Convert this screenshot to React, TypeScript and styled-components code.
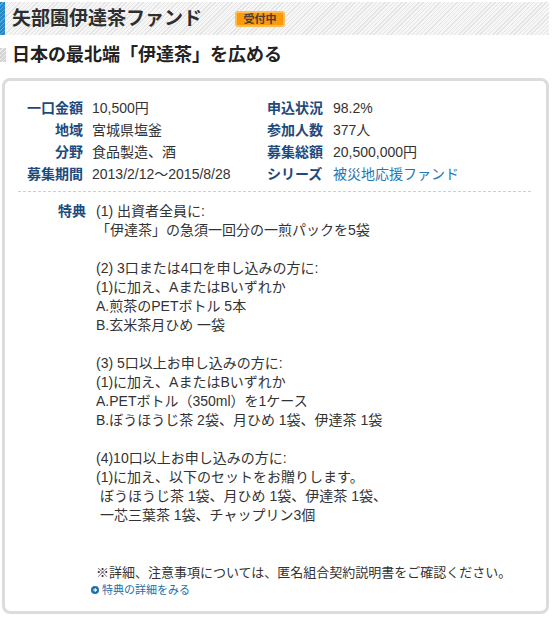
import styled, { createGlobalStyle } from "styled-components";

const GlobalStyle = createGlobalStyle`
  html, body {
    margin: 0;
    padding: 0;
    background: #fff;
  }
  body {
    font-family: "Liberation Sans", "Noto Sans CJK JP", sans-serif;
    color: #333;
  }
`;

const Page = styled.div`
  width: 553px;
  padding-top: 2px;
`;

const Header = styled.div`
  display: flex;
  align-items: center;
  height: 33px;
  width: 549px;
  background: repeating-linear-gradient(135deg, #f6f6f6 0 2px, #e4e4e4 2px 3px);
`;

const BlueBar = styled.div`
  width: 5px;
  align-self: stretch;
  background: repeating-linear-gradient(135deg, #2489c6 0 2px, #56a9dc 2px 3px);
`;

const Title = styled.h1`
  margin: 0 0 0 7px;
  font-size: 19px;
  line-height: 24px;
  font-weight: bold;
  color: #2e2e2e;
`;

const Badge = styled.span`
  margin-left: 33px;
  display: inline-flex;
  align-items: center;
  justify-content: center;
  width: 46px;
  height: 12px;
  border: 2px solid #fdbb52;
  border-radius: 3px;
  background: #fb9a08;
  color: #4a4038;
  font-size: 11px;
  font-weight: bold;
  line-height: 12px;
`;

const SubRow = styled.div`
  display: flex;
  align-items: center;
  margin-top: 10px;
  height: 20px;
`;

const GraySquare = styled.div`
  width: 6px;
  height: 14px;
  background: repeating-linear-gradient(135deg, #d4d4d4 0 2px, #ececec 2px 3px);
`;

const SubTitle = styled.h2`
  margin: 0 0 0 6px;
  font-size: 18px;
  line-height: 20px;
  font-weight: bold;
  color: #222;
`;

const Card = styled.div`
  margin: 13px 4px 0 2px;
  border: 3px solid #dcdcdc;
  border-radius: 8px;
  padding: 16px 15px 13px 13px;
`;

const InfoGrid = styled.div`
  display: grid;
  grid-template-columns: 58px 166px 57px 1fr;
  column-gap: 9px;
  padding-left: 7px;
  font-size: 14px;
  line-height: 22px;
`;

const Label = styled.div<{ $align?: "left" | "right" }>`
  font-weight: bold;
  color: #1d4a7c;
  text-align: ${(p) => p.$align ?? "right"};
  white-space: nowrap;
`;

const Value = styled.div<{ $link?: boolean }>`
  color: ${(p) => (p.$link ? "#1f78b4" : "#333")};
  white-space: nowrap;
`;

const Dashed = styled.div`
  margin-top: 6px;
  border-top: 1px dashed #cfcfcf;
`;

const Perks = styled.div`
  display: grid;
  grid-template-columns: 68px 1fr;
  column-gap: 10px;
  margin-top: 10px;
  font-size: 14px;
  line-height: 19px;
`;

const PerkText = styled.div`
  color: #333;
  white-space: pre;
`;

const Note = styled.div`
  margin: 19px 0 0 78px;
  font-size: 13px;
  line-height: 19px;
  color: #333;
`;

const DetailLink = styled.a`
  display: flex;
  align-items: center;
  gap: 3px;
  margin-left: 73px;
  font-size: 11px;
  line-height: 16px;
  color: #1f6fa8;
  text-decoration: none;
`;

const info: [string, string, string, string, boolean?][] = [
  ["一口金額", "10,500円", "申込状況", "98.2%"],
  ["地域", "宮城県塩釜", "参加人数", "377人"],
  ["分野", "食品製造、酒", "募集総額", "20,500,000円"],
  ["募集期間", "2013/2/12～2015/8/28", "シリーズ", "被災地応援ファンド", true],
];

const perkLines = [
  "(1) 出資者全員に:",
  "「伊達茶」の急須一回分の一煎パックを5袋",
  "",
  "(2) 3口または4口を申し込みの方に:",
  "(1)に加え、AまたはBいずれか",
  "A.煎茶のPETボトル 5本",
  "B.玄米茶月ひめ 一袋",
  "",
  "(3) 5口以上お申し込みの方に:",
  "(1)に加え、AまたはBいずれか",
  "A.PETボトル（350ml）を1ケース",
  "B.ぼうほうじ茶 2袋、月ひめ 1袋、伊達茶 1袋",
  "",
  "(4)10口以上お申し込みの方に:",
  "(1)に加え、以下のセットをお贈りします。",
  " ぼうほうじ茶 1袋、月ひめ 1袋、伊達茶 1袋、",
  " 一芯三葉茶 1袋、チャップリン3個",
  "",
];

function ArrowDot() {
  return (
    <svg width="8" height="8" viewBox="0 0 8 8">
      <circle cx="4" cy="4" r="4" fill="#1f6fa8" />
      <path d="M2 4h3.2M3.8 2.4L5.4 4 3.8 5.6" stroke="#fff" strokeWidth="1.2" fill="none" />
    </svg>
  );
}

export default function App() {
  return (
    <>
      <GlobalStyle />
      <Page>
        <Header>
          <BlueBar />
          <Title>矢部園伊達茶ファンド</Title>
          <Badge>受付中</Badge>
        </Header>
        <SubRow>
          <GraySquare />
          <SubTitle>日本の最北端「伊達茶」を広める</SubTitle>
        </SubRow>
        <Card>
          <InfoGrid>
            {info.map(([l1, v1, l2, v2, link]) => (
              <>
                <Label key={l1}>{l1}</Label>
                <Value key={l1 + "v"}>{v1}</Value>
                <Label key={l2} $align="left">
                  {l2}
                </Label>
                <Value key={l2 + "v"} $link={link}>
                  {v2}
                </Value>
              </>
            ))}
          </InfoGrid>
          <Dashed />
          <Perks>
            <Label>特典</Label>
            <PerkText>{perkLines.map((l) => (l === "" ? "\u00a0" : l)).join("\n")}</PerkText>
          </Perks>
          <Note>※詳細、注意事項については、匿名組合契約説明書をご確認ください。</Note>
          <DetailLink href="#">
            <ArrowDot />
            特典の詳細をみる
          </DetailLink>
        </Card>
      </Page>
    </>
  );
}
